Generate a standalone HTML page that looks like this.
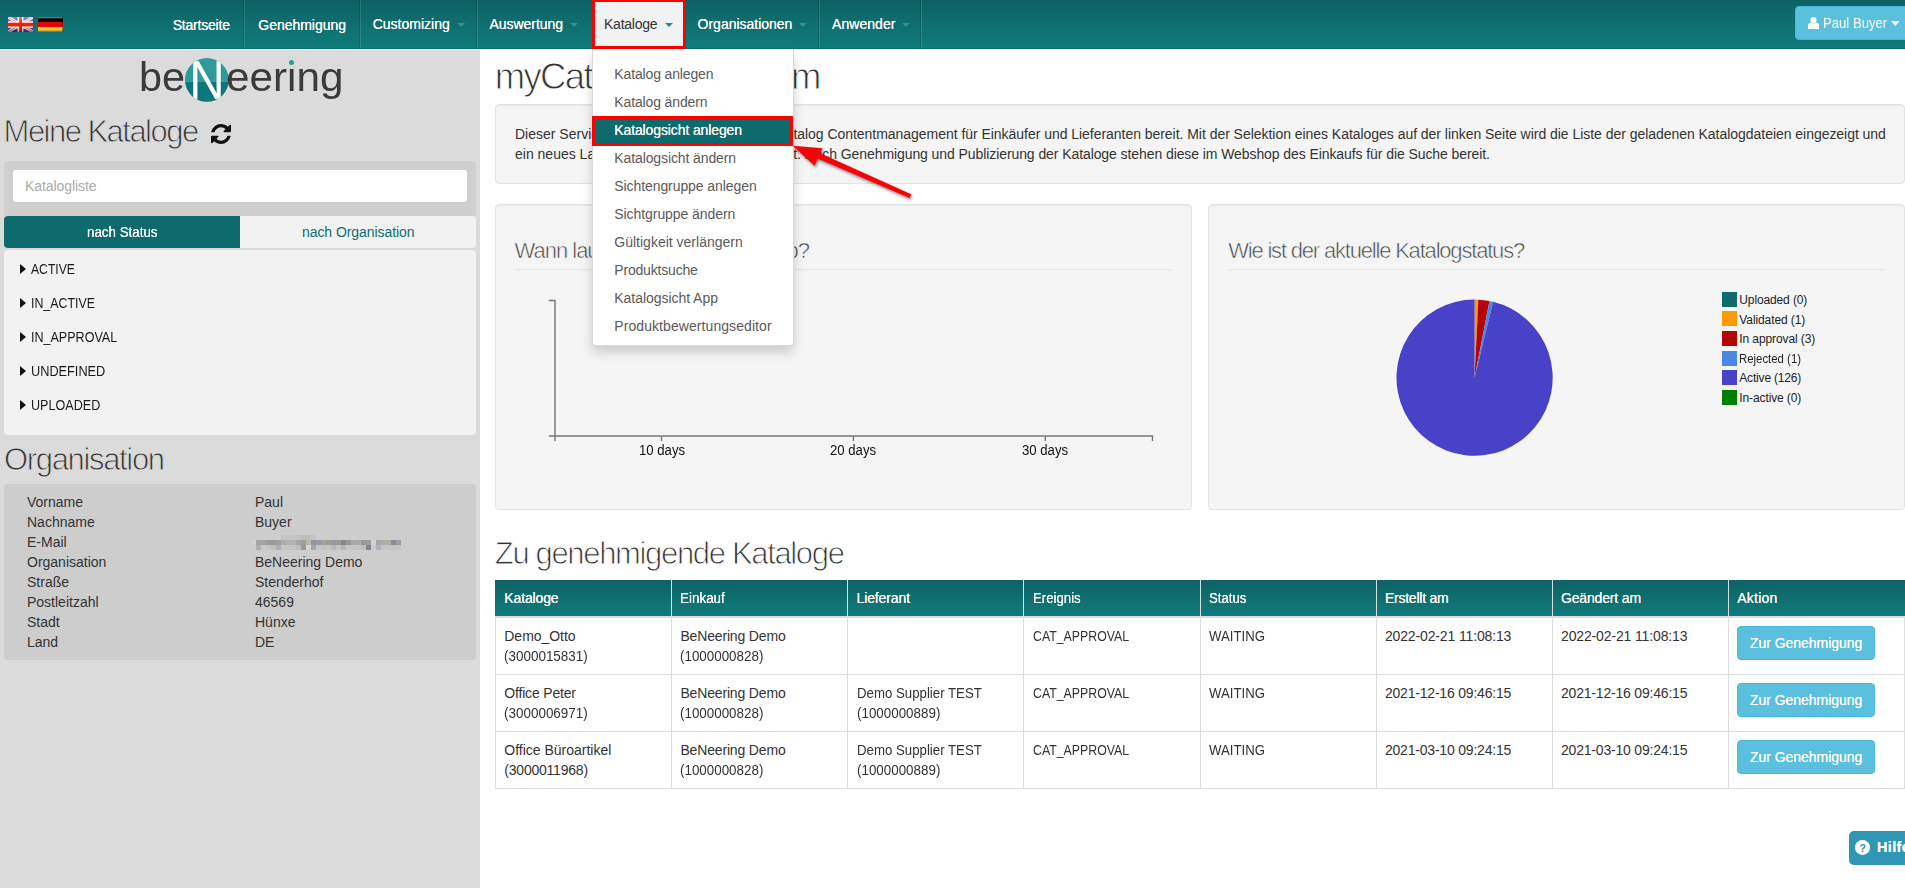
<!DOCTYPE html>
<html lang="de"><head><meta charset="utf-8"><title>myCatalog</title>
<style>
html,body{margin:0;padding:0}
body{width:1905px;height:888px;overflow:hidden;background:#fff;position:relative;font-family:"Liberation Sans",Arial,sans-serif;font-size:14px;color:#333}
.t{position:absolute;white-space:nowrap;display:block}
.b{position:absolute;box-sizing:border-box}
svg{position:absolute;overflow:visible}

.thin{-webkit-text-stroke:0.9px var(--bg)}

</style></head><body>
<div class="b" style="left:0px;top:49px;width:480px;height:839px;background:#dbdbdb"></div>
<div class="b" style="left:0px;top:0px;width:1905px;height:49px;background:linear-gradient(#0d6264,#117b7b);border-bottom:1px solid #0a6c6c"></div>
<div class="b" style="left:0px;top:49px;width:480px;height:1px;background:#f2f2f2"></div>
<svg style="left:8px;top:17px;overflow:hidden" width="25" height="15" viewBox="0 0 25 15"><defs><linearGradient id="gl" x1="0" y1="0" x2="0" y2="1"><stop offset="0" stop-color="#fff" stop-opacity=".38"/><stop offset=".45" stop-color="#fff" stop-opacity="0"/><stop offset=".7" stop-color="#000" stop-opacity="0"/><stop offset="1" stop-color="#000" stop-opacity=".42"/></linearGradient></defs><rect width="25" height="15" fill="#4545ae"/><path d="M0 0L25 15M25 0L0 15" stroke="#fff" stroke-width="2.800"/><path d="M0 0L25 15M25 0L0 15" stroke="#f0503c" stroke-width=".9"/><path d="M12.500 0V15" stroke="#fff" stroke-width="6"/><path d="M0 7.500H25" stroke="#fff" stroke-width="6.400"/><path d="M12.600 0V15" stroke="#f02200" stroke-width="3"/><path d="M0 7.600H25" stroke="#f02200" stroke-width="3.800"/><rect width="25" height="15" fill="url(#gl)"/></svg>
<svg style="left:38px;top:17px;overflow:hidden" width="25" height="15" viewBox="0 0 25 15"><defs><linearGradient id="gd" x1="0" y1="0" x2="0" y2="1"><stop offset="0" stop-color="#fff" stop-opacity=".6"/><stop offset=".12" stop-color="#fff" stop-opacity=".05"/><stop offset=".85" stop-color="#000" stop-opacity="0"/><stop offset="1" stop-color="#000" stop-opacity=".5"/></linearGradient></defs><rect width="25" height="5" fill="#000"/><rect y="5" width="25" height="5" fill="#e80000"/><rect y="10" width="25" height="5" fill="#f8c832"/><rect width="25" height="15" fill="url(#gd)"/><rect x="24" width="1" height="15" fill="#000" fill-opacity=".35"/></svg>
<div class="b" style="left:244px;top:0px;width:1px;height:48px;background:rgba(255,255,255,.13)"></div>
<div class="b" style="left:243px;top:0px;width:1px;height:48px;background:rgba(0,0,0,.12)"></div>
<div class="b" style="left:360px;top:0px;width:1px;height:48px;background:rgba(255,255,255,.13)"></div>
<div class="b" style="left:359px;top:0px;width:1px;height:48px;background:rgba(0,0,0,.12)"></div>
<div class="b" style="left:477px;top:0px;width:1px;height:48px;background:rgba(255,255,255,.13)"></div>
<div class="b" style="left:476px;top:0px;width:1px;height:48px;background:rgba(0,0,0,.12)"></div>
<div class="b" style="left:819px;top:0px;width:1px;height:48px;background:rgba(255,255,255,.13)"></div>
<div class="b" style="left:818px;top:0px;width:1px;height:48px;background:rgba(0,0,0,.12)"></div>
<div class="b" style="left:921px;top:0px;width:1px;height:48px;background:rgba(255,255,255,.13)"></div>
<div class="b" style="left:920px;top:0px;width:1px;height:48px;background:rgba(0,0,0,.12)"></div>
<span class="t" style="left:172.7px;top:15.65px;font-size:14px;line-height:18px;color:#fff;letter-spacing:-0.203px;text-shadow:0 0 .25px #fff;">Startseite</span>
<span class="t" style="left:258.3px;top:15.65px;font-size:14px;line-height:18px;color:#fff;letter-spacing:-0.021px;text-shadow:0 0 .25px #fff;">Genehmigung</span>
<span class="t" style="left:372.7px;top:15.35px;font-size:14px;line-height:18px;color:#fff;letter-spacing:0.000px;text-shadow:0 0 .25px #fff;">Customizing</span>
<svg style="left:456.5px;top:23px" width="8" height="4"><path d="M0 0h8l-4 4z" fill="#3a8f90"/></svg>
<span class="t" style="left:489.5px;top:15.35px;font-size:14px;line-height:18px;color:#fff;letter-spacing:-0.045px;text-shadow:0 0 .25px #fff;">Auswertung</span>
<svg style="left:569.5px;top:23px" width="8" height="4"><path d="M0 0h8l-4 4z" fill="#3a8f90"/></svg>
<span class="t" style="left:697.6px;top:15.35px;font-size:14px;line-height:18px;color:#fff;letter-spacing:-0.016px;text-shadow:0 0 .25px #fff;">Organisationen</span>
<svg style="left:799px;top:23px" width="8" height="4"><path d="M0 0h8l-4 4z" fill="#3a8f90"/></svg>
<span class="t" style="left:832.0px;top:15.35px;font-size:14px;line-height:18px;color:#fff;letter-spacing:0.055px;text-shadow:0 0 .25px #fff;">Anwender</span>
<svg style="left:902px;top:23px" width="8" height="4"><path d="M0 0h8l-4 4z" fill="#3a8f90"/></svg>
<div class="b" style="left:592px;top:-1px;width:94px;height:49.7px;background:#f2f2f2;border:3px solid #fd0000"></div>
<span class="t" style="left:604.0px;top:15.35px;font-size:14px;line-height:18px;color:#333;letter-spacing:-0.236px;">Kataloge</span>
<svg style="left:664.500px;top:23.200px" width="8" height="4"><path d="M0 0h8l-4 4z" fill="#21888a"/></svg>
<div class="b" style="left:1795px;top:6px;width:120px;height:34px;background:#5bc0de;border:1px solid #46b8da;border-radius:4px"></div>
<svg style="left:1808px;top:17px" width="11" height="12" viewBox="0 0 11 12"><circle cx="5.5" cy="3.1" r="3.1" fill="#fff"/><path d="M0 12V9.5Q0 6 2.6 5.6Q5.5 7.6 8.4 5.6Q11 6 11 9.5V12z" fill="#fff"/></svg>
<span class="t" style="left:1823.3px;top:14.05px;font-size:14px;line-height:18px;color:#fff;transform:scaleX(0.9377);transform-origin:0 0;">Paul Buyer</span>
<svg style="left:1891px;top:21px" width="8.6" height="5"><path d="M0 0h8.600l-4.300 5z" fill="#fff"/></svg>
<span class="t" style="left:138.6px;top:50.22px;font-size:41.5px;line-height:54px;color:#3b3b3b;transform:scaleX(0.9966);transform-origin:0 0;">be</span>
<svg style="left:184.600px;top:58.200px" width="43.800" height="43.800" viewBox="0 0 43.800 43.800"><defs><clipPath id="lc"><circle cx="21.900" cy="21.900" r="21.900"/></clipPath></defs><g clip-path="url(#lc)"><rect width="43.800" height="23.600" fill="#2f9a9a"/><rect y="23.600" width="43.800" height="21" fill="#0c7678"/><text x="21.900" y="41" text-anchor="middle" font-family="Liberation Sans, Arial, sans-serif" font-size="55" fill="#fff" textLength="35.500" lengthAdjust="spacingAndGlyphs">N</text></g></svg>
<span class="t" style="left:225.6px;top:50.22px;font-size:41.5px;line-height:54px;color:#3b3b3b;transform:scaleX(1.0187);transform-origin:0 0;">eering</span>
<div class="b" style="left:288.6px;top:60.1px;width:5.4px;height:5.4px;background:#2a9a9b;border-radius:50%;box-shadow:0 0 0 1px #dbdbdb"></div>
<span class="t thin" style="left:3.6px;top:111.56px;font-size:31px;line-height:40px;color:#333;letter-spacing:-1.529px;--bg:#dbdbdb;">Meine Kataloge</span>
<svg style="left:211px;top:124px" width="20" height="20" viewBox="128 128 1536 1536"><path fill="#111" d="M1639 1056q0 5-1 7-64 268-268 434.500t-478 166.500q-146 0-282.500-55t-243.500-157l-129 129q-19 19-45 19t-45-19-19-45v-448q0-26 19-45t45-19h448q26 0 45 19t19 45-19 45l-137 137q71 66 161 102t187 36q134 0 250-65t186-179q11-17 53-117 8-23 30-23h192q13 0 22.500 9.500t9.500 22.500zm25-800v448q0 26-19 45t-45 19h-448q-26 0-45-19t-19-45 19-45l138-138q-148-137-349-137-134 0-250 65t-186 179q-11 17-53 117-8 23-30 23h-199q-13 0-22.500-9.500t-9.500-22.500v-7q65-268 270-434.500t480-166.500q146 0 284 55.500t245 156.500l130-129q19-19 45-19t45 19 19 45z"/></svg>
<div class="b" style="left:4px;top:161px;width:472px;height:55px;background:#cfcfcf;border-radius:4px 4px 0 0"></div>
<div class="b" style="left:13px;top:170px;width:454px;height:32px;background:#fff;border-radius:3px"></div>
<span class="t" style="left:25.0px;top:177.15px;font-size:14px;line-height:18px;color:#aaa;letter-spacing:-0.078px;">Katalogliste</span>
<div class="b" style="left:4px;top:216px;width:236px;height:32px;background:#0e6b6d;border-radius:4px 0 0 4px"></div>
<div class="b" style="left:240px;top:216px;width:236px;height:32px;background:#f2f2f2;border-radius:0 4px 4px 0"></div>
<span class="t" style="left:87.0px;top:223.15px;font-size:14px;line-height:18px;color:#fff;transform:scaleX(0.9537);transform-origin:0 0;text-shadow:0 0 .4px #fff;">nach Status</span>
<span class="t" style="left:302.0px;top:223.15px;font-size:14px;line-height:18px;color:#0f6f71;letter-spacing:-0.067px;">nach Organisation</span>
<div class="b" style="left:4px;top:250px;width:472px;height:184.5px;background:#f2f2f2;border-radius:4px"></div>
<svg style="left:20px;top:264px" width="6" height="10"><path d="M0 0v10l6-5z" fill="#111"/></svg>
<span class="t" style="left:30.7px;top:260.15px;font-size:14px;line-height:18px;color:#1a1a1a;transform:scaleX(0.8699);transform-origin:0 0;">ACTIVE</span>
<svg style="left:20px;top:298px" width="6" height="10"><path d="M0 0v10l6-5z" fill="#111"/></svg>
<span class="t" style="left:30.7px;top:294.15px;font-size:14px;line-height:18px;color:#1a1a1a;transform:scaleX(0.8831);transform-origin:0 0;">IN_ACTIVE</span>
<svg style="left:20px;top:332px" width="6" height="10"><path d="M0 0v10l6-5z" fill="#111"/></svg>
<span class="t" style="left:30.7px;top:328.15px;font-size:14px;line-height:18px;color:#1a1a1a;transform:scaleX(0.8956);transform-origin:0 0;">IN_APPROVAL</span>
<svg style="left:20px;top:366px" width="6" height="10"><path d="M0 0v10l6-5z" fill="#111"/></svg>
<span class="t" style="left:30.7px;top:362.15px;font-size:14px;line-height:18px;color:#1a1a1a;transform:scaleX(0.9097);transform-origin:0 0;">UNDEFINED</span>
<svg style="left:20px;top:400px" width="6" height="10"><path d="M0 0v10l6-5z" fill="#111"/></svg>
<span class="t" style="left:30.7px;top:396.15px;font-size:14px;line-height:18px;color:#1a1a1a;transform:scaleX(0.8996);transform-origin:0 0;">UPLOADED</span>
<span class="t thin" style="left:4.0px;top:439.56px;font-size:31px;line-height:40px;color:#333;letter-spacing:-1.339px;--bg:#dbdbdb;">Organisation</span>
<div class="b" style="left:4px;top:484px;width:472px;height:175.5px;background:#cdcdcd;border-radius:4px"></div>
<span class="t" style="left:27.0px;top:493.15px;font-size:14px;line-height:18px;color:#333;">Vorname</span>
<span class="t" style="left:255.0px;top:493.15px;font-size:14px;line-height:18px;color:#333;">Paul</span>
<span class="t" style="left:27.0px;top:513.15px;font-size:14px;line-height:18px;color:#333;">Nachname</span>
<span class="t" style="left:255.0px;top:513.15px;font-size:14px;line-height:18px;color:#333;">Buyer</span>
<span class="t" style="left:27.0px;top:533.15px;font-size:14px;line-height:18px;color:#333;">E-Mail</span>
<span class="t" style="left:27.0px;top:553.15px;font-size:14px;line-height:18px;color:#333;">Organisation</span>
<span class="t" style="left:255.0px;top:553.15px;font-size:14px;line-height:18px;color:#333;">BeNeering Demo</span>
<span class="t" style="left:27.0px;top:573.15px;font-size:14px;line-height:18px;color:#333;">Straße</span>
<span class="t" style="left:255.0px;top:573.15px;font-size:14px;line-height:18px;color:#333;">Stenderhof</span>
<span class="t" style="left:27.0px;top:593.15px;font-size:14px;line-height:18px;color:#333;">Postleitzahl</span>
<span class="t" style="left:255.0px;top:593.15px;font-size:14px;line-height:18px;color:#333;">46569</span>
<span class="t" style="left:27.0px;top:613.15px;font-size:14px;line-height:18px;color:#333;">Stadt</span>
<span class="t" style="left:255.0px;top:613.15px;font-size:14px;line-height:18px;color:#333;">Hünxe</span>
<span class="t" style="left:27.0px;top:633.15px;font-size:14px;line-height:18px;color:#333;">Land</span>
<span class="t" style="left:255.0px;top:633.15px;font-size:14px;line-height:18px;color:#333;">DE</span>
<div class="b" style="left:281px;top:535px;width:35px;height:5px;background:linear-gradient(90deg,#c6c4c6,#c4c6c4 40%,#bcbcbc 70%,#c2c8d0)"></div>
<div class="b" style="left:351px;top:535px;width:5px;height:5px;background:#d0d2d0"></div>
<div class="b" style="left:251px;top:540px;width:5px;height:5px;background:#d2d0cc"></div>
<div class="b" style="left:256px;top:540px;width:145px;height:5px;background:linear-gradient(90deg,#a5a3a8 0px,#a5a3a8 5px,#a2a2a2 5px,#a2a2a2 10px,#9d9b9c 10px,#9d9b9c 15px,#9b9a9a 15px,#9b9a9a 20px,#a0a0a4 20px,#a0a0a4 25px,#b0adb2 25px,#b0adb2 30px,#b2b2b0 30px,#b2b2b0 35px,#b3b3b1 35px,#b3b3b1 40px,#aba3a3 40px,#aba3a3 45px,#9c9fa6 45px,#9c9fa6 50px,#bfb5aa 50px,#bfb5aa 55px,#8e999c 55px,#8e999c 60px,#9a98a2 60px,#9a98a2 65px,#a0a2a4 65px,#a0a2a4 70px,#a59a90 70px,#a59a90 75px,#9896a4 75px,#9896a4 80px,#979c9e 80px,#979c9e 85px,#8c8684 85px,#8c8684 90px,#929a9e 90px,#929a9e 95px,#a5abae 95px,#a5abae 100px,#b0a8ac 100px,#b0a8ac 105px,#929a9a 105px,#929a9a 110px,#a398a8 110px,#a398a8 115px,#d0d4cc 115px,#d0d4cc 120px,#a8a6ae 120px,#a8a6ae 125px,#aaaca8 125px,#aaaca8 130px,#acaeaa 130px,#acaeaa 135px,#988a8c 135px,#988a8c 140px,#94a0ac 140px,#94a0ac 145px)"></div>
<div class="b" style="left:256px;top:545px;width:145px;height:5px;background:linear-gradient(90deg,#b0b0b0 0px,#b0b0b0 5px,#c6caca 5px,#c6caca 10px,#c4c4c4 10px,#c4c4c4 15px,#c2bebb 15px,#c2bebb 20px,#aab0b4 20px,#aab0b4 25px,#c4c4c4 25px,#c4c4c4 30px,#c4c4c4 30px,#c4c4c4 35px,#c4c4c4 35px,#c4c4c4 40px,#c2bcb8 40px,#c2bcb8 45px,#9a9a9e 45px,#9a9a9e 50px,#d4d4d4 50px,#d4d4d4 55px,#a0a8aa 55px,#a0a8aa 60px,#c4c4c4 60px,#c4c4c4 65px,#bfc0c4 65px,#bfc0c4 70px,#c4c4c4 70px,#c4c4c4 75px,#bbb8bc 75px,#bbb8bc 80px,#c4c4c4 80px,#c4c4c4 85px,#b8b4ae 85px,#b8b4ae 90px,#c2c8cc 90px,#c2c8cc 95px,#c4c4c4 95px,#c4c4c4 100px,#c4c4c4 100px,#c4c4c4 105px,#c2bab4 105px,#c2bab4 110px,#80828e 110px,#80828e 115px,#c8cacc 115px,#c8cacc 120px,#b2b2b2 120px,#b2b2b2 125px,#c4c4c4 125px,#c4c4c4 130px,#c4c4c4 130px,#c4c4c4 135px,#c4c4c4 135px,#c4c4c4 140px,#c0c6ca 140px,#c0c6ca 145px)"></div>
<span class="t thin" style="left:494.8px;top:53.05px;font-size:36.5px;line-height:47px;color:#333;letter-spacing:-1.674px;--bg:#fff;">myCatalog Programm</span>
<div class="b" style="left:495px;top:104px;width:1409.5px;height:80px;background:#f5f5f5;border:1px solid #e3e3e3;border-radius:4px;box-shadow:inset 0 1px 1px rgba(0,0,0,.05)"></div>
<span class="t" style="left:515.0px;top:125.45px;font-size:14px;line-height:18px;color:#333;">Dieser Service stellt das beNeering myCa</span>
<span class="t" style="left:793.4px;top:125.45px;font-size:14px;line-height:18px;color:#333;letter-spacing:-0.037px;">talog Contentmanagement für Einkäufer und Lieferanten bereit. Mit der Selektion eines Kataloges auf der linken Seite wird die Liste der geladenen Katalogdateien eingezeigt und</span>
<span class="t" style="left:515.0px;top:145.45px;font-size:14px;line-height:18px;color:#333;">ein neues Ladefile bereitgestell</span>
<span class="t" style="left:793.2px;top:145.45px;font-size:14px;line-height:18px;color:#333;letter-spacing:-0.083px;">t. Nach Genehmigung und Publizierung der Kataloge stehen diese im Webshop des Einkaufs für die Suche bereit.</span>
<div class="b" style="left:495px;top:204px;width:697px;height:305.5px;background:#f5f5f5;border:1px solid #e3e3e3;border-radius:4px;box-shadow:inset 0 1px 1px rgba(0,0,0,.05)"></div>
<div class="b" style="left:1208px;top:204px;width:696.5px;height:305.5px;background:#f5f5f5;border:1px solid #e3e3e3;border-radius:4px;box-shadow:inset 0 1px 1px rgba(0,0,0,.05)"></div>
<span class="t thin" style="left:514.5px;top:236.08px;font-size:22px;line-height:29px;color:#444;letter-spacing:-1.003px;--bg:#f5f5f5;-webkit-text-stroke-width:.55px;">Wann laufen meine Kataloge ab?</span>
<span class="t thin" style="left:1228.2px;top:236.08px;font-size:22px;line-height:29px;color:#444;letter-spacing:-1.191px;--bg:#f5f5f5;-webkit-text-stroke-width:.55px;">Wie ist der aktuelle Katalogstatus?</span>
<div class="b" style="left:515px;top:269px;width:657px;height:1px;background:#e5e5e5"></div>
<div class="b" style="left:1228.5px;top:269px;width:656.5px;height:1px;background:#e5e5e5"></div>
<svg style="left:540px;top:290px" width="630" height="160"><path d="M8.800 10.500H15V151M8.800 146H612.500V151M121.5 146v5M313.4 146v5M505.3 146v5" fill="none" stroke="#777" stroke-width="1.4"/></svg>
<span class="t" style="left:638.5px;top:441.45px;font-size:14px;line-height:18px;color:#111;transform:scaleX(0.9385);transform-origin:0 0;">10 days</span>
<span class="t" style="left:830.4px;top:441.45px;font-size:14px;line-height:18px;color:#111;transform:scaleX(0.9385);transform-origin:0 0;">20 days</span>
<span class="t" style="left:1022.3px;top:441.45px;font-size:14px;line-height:18px;color:#111;transform:scaleX(0.9385);transform-origin:0 0;">30 days</span>
<svg style="left:0;top:0" width="1905" height="888"><path d="M1474.6 377.7L1474.60 299.60 A78.1 78.1 0 0 1 1478.34 299.69 Z" fill="#ff9900"/><path d="M1474.6 377.7L1478.34 299.69 A78.1 78.1 0 0 1 1489.49 301.03 Z" fill="#b40404"/><path d="M1474.6 377.7L1489.49 301.03 A78.1 78.1 0 0 1 1493.15 301.84 Z" fill="#4a86e8"/><path d="M1474.6 377.7L1493.15 301.84 A78.1 78.1 0 1 1 1474.60 299.60 Z" fill="#4842c8"/></svg>
<div class="b" style="left:1722px;top:292px;width:15px;height:15px;background:#0e6b6d"></div>
<span class="t" style="left:1739.3px;top:292.24px;font-size:12px;line-height:16px;color:#222;letter-spacing:-0.125px;">Uploaded (0)</span>
<div class="b" style="left:1722px;top:311px;width:15px;height:15px;background:#ff9900"></div>
<span class="t" style="left:1739.3px;top:312.04px;font-size:12px;line-height:16px;color:#222;letter-spacing:-0.095px;">Validated (1)</span>
<div class="b" style="left:1722px;top:331px;width:15px;height:15px;background:#b40404"></div>
<span class="t" style="left:1739.3px;top:331.24px;font-size:12px;line-height:16px;color:#222;letter-spacing:-0.097px;">In approval (3)</span>
<div class="b" style="left:1722px;top:351px;width:15px;height:15px;background:#4a86e8"></div>
<span class="t" style="left:1739.3px;top:351.24px;font-size:12px;line-height:16px;color:#222;transform:scaleX(0.9486);transform-origin:0 0;">Rejected (1)</span>
<div class="b" style="left:1722px;top:370px;width:15px;height:15px;background:#4842c8"></div>
<span class="t" style="left:1739.3px;top:370.24px;font-size:12px;line-height:16px;color:#222;letter-spacing:-0.183px;">Active (126)</span>
<div class="b" style="left:1722px;top:390px;width:15px;height:15px;background:#008000"></div>
<span class="t" style="left:1739.3px;top:390.24px;font-size:12px;line-height:16px;color:#222;letter-spacing:-0.112px;">In-active (0)</span>
<span class="t thin" style="left:494.8px;top:534.06px;font-size:31px;line-height:40px;color:#333;letter-spacing:-1.339px;--bg:#fff;">Zu genehmigende Kataloge</span>
<div class="b" style="left:495px;top:580px;width:1409.5px;height:36px;background:linear-gradient(#0d6264,#117b7b)"></div>
<div class="b" style="left:495px;top:616px;width:1410px;height:2px;background:#ddd"></div>
<span class="t" style="left:504.3px;top:588.65px;font-size:14px;line-height:18px;color:#fff;letter-spacing:-0.136px;text-shadow:0 0 .3px #fff;">Kataloge</span>
<span class="t" style="left:680.4px;top:588.65px;font-size:14px;line-height:18px;color:#fff;transform:scaleX(0.9596);transform-origin:0 0;text-shadow:0 0 .3px #fff;">Einkauf</span>
<div class="b" style="left:671.125px;top:580px;width:1px;height:36px;background:#d3e0e0"></div>
<span class="t" style="left:856.5px;top:588.65px;font-size:14px;line-height:18px;color:#fff;letter-spacing:-0.119px;text-shadow:0 0 .3px #fff;">Lieferant</span>
<div class="b" style="left:847.25px;top:580px;width:1px;height:36px;background:#d3e0e0"></div>
<span class="t" style="left:1032.7px;top:588.65px;font-size:14px;line-height:18px;color:#fff;transform:scaleX(0.9434);transform-origin:0 0;text-shadow:0 0 .3px #fff;">Ereignis</span>
<div class="b" style="left:1023.38px;top:580px;width:1px;height:36px;background:#d3e0e0"></div>
<span class="t" style="left:1208.8px;top:588.65px;font-size:14px;line-height:18px;color:#fff;transform:scaleX(0.9398);transform-origin:0 0;text-shadow:0 0 .3px #fff;">Status</span>
<div class="b" style="left:1199.5px;top:580px;width:1px;height:36px;background:#d3e0e0"></div>
<span class="t" style="left:1384.9px;top:588.65px;font-size:14px;line-height:18px;color:#fff;letter-spacing:-0.231px;text-shadow:0 0 .3px #fff;">Erstellt am</span>
<div class="b" style="left:1375.62px;top:580px;width:1px;height:36px;background:#d3e0e0"></div>
<span class="t" style="left:1561.0px;top:588.65px;font-size:14px;line-height:18px;color:#fff;letter-spacing:-0.167px;text-shadow:0 0 .3px #fff;">Geändert am</span>
<div class="b" style="left:1551.75px;top:580px;width:1px;height:36px;background:#d3e0e0"></div>
<span class="t" style="left:1737.2px;top:588.65px;font-size:14px;line-height:18px;color:#fff;letter-spacing:0.259px;text-shadow:0 0 .3px #fff;">Aktion</span>
<div class="b" style="left:1727.88px;top:580px;width:1px;height:36px;background:#d3e0e0"></div>
<div class="b" style="left:495px;top:674px;width:1410px;height:1px;background:#ddd"></div>
<span class="t" style="left:504.3px;top:627.45px;font-size:14px;line-height:18px;color:#333;letter-spacing:-0.033px;">Demo_Otto</span>
<span class="t" style="left:504.3px;top:647.45px;font-size:14px;line-height:18px;color:#333;transform:scaleX(0.9607);transform-origin:0 0;">(3000015831)</span>
<span class="t" style="left:680.4px;top:627.45px;font-size:14px;line-height:18px;color:#333;letter-spacing:-0.157px;">BeNeering Demo</span>
<span class="t" style="left:680.4px;top:647.45px;font-size:14px;line-height:18px;color:#333;transform:scaleX(0.9561);transform-origin:0 0;">(1000000828)</span>
<span class="t" style="left:1032.7px;top:627.45px;font-size:14px;line-height:18px;color:#333;transform:scaleX(0.8808);transform-origin:0 0;">CAT_APPROVAL</span>
<span class="t" style="left:1208.8px;top:627.45px;font-size:14px;line-height:18px;color:#333;transform:scaleX(0.9432);transform-origin:0 0;">WAITING</span>
<span class="t" style="left:1384.9px;top:627.45px;font-size:14px;line-height:18px;color:#333;letter-spacing:-0.138px;">2022-02-21 11:08:13</span>
<span class="t" style="left:1561.0px;top:627.45px;font-size:14px;line-height:18px;color:#333;letter-spacing:-0.138px;">2022-02-21 11:08:13</span>
<div class="b" style="left:1737px;top:626px;width:138px;height:34px;background:#5bc0de;border:1px solid #46b8da;border-radius:4px"></div>
<span class="t" style="left:1750.0px;top:634.15px;font-size:14px;line-height:18px;color:#fff;letter-spacing:-0.042px;text-shadow:0 0 .3px #fff;">Zur Genehmigung</span>
<div class="b" style="left:495px;top:731px;width:1410px;height:1px;background:#ddd"></div>
<span class="t" style="left:504.3px;top:684.45px;font-size:14px;line-height:18px;color:#333;letter-spacing:-0.178px;">Office Peter</span>
<span class="t" style="left:504.3px;top:704.45px;font-size:14px;line-height:18px;color:#333;transform:scaleX(0.9607);transform-origin:0 0;">(3000006971)</span>
<span class="t" style="left:680.4px;top:684.45px;font-size:14px;line-height:18px;color:#333;letter-spacing:-0.157px;">BeNeering Demo</span>
<span class="t" style="left:680.4px;top:704.45px;font-size:14px;line-height:18px;color:#333;transform:scaleX(0.9561);transform-origin:0 0;">(1000000828)</span>
<span class="t" style="left:856.5px;top:684.45px;font-size:14px;line-height:18px;color:#333;transform:scaleX(0.9456);transform-origin:0 0;">Demo Supplier TEST</span>
<span class="t" style="left:856.5px;top:704.45px;font-size:14px;line-height:18px;color:#333;transform:scaleX(0.9561);transform-origin:0 0;">(1000000889)</span>
<span class="t" style="left:1032.7px;top:684.45px;font-size:14px;line-height:18px;color:#333;transform:scaleX(0.8808);transform-origin:0 0;">CAT_APPROVAL</span>
<span class="t" style="left:1208.8px;top:684.45px;font-size:14px;line-height:18px;color:#333;transform:scaleX(0.9432);transform-origin:0 0;">WAITING</span>
<span class="t" style="left:1384.9px;top:684.45px;font-size:14px;line-height:18px;color:#333;letter-spacing:-0.196px;">2021-12-16 09:46:15</span>
<span class="t" style="left:1561.0px;top:684.45px;font-size:14px;line-height:18px;color:#333;letter-spacing:-0.196px;">2021-12-16 09:46:15</span>
<div class="b" style="left:1737px;top:683px;width:138px;height:34px;background:#5bc0de;border:1px solid #46b8da;border-radius:4px"></div>
<span class="t" style="left:1750.0px;top:691.15px;font-size:14px;line-height:18px;color:#fff;letter-spacing:-0.042px;text-shadow:0 0 .3px #fff;">Zur Genehmigung</span>
<div class="b" style="left:495px;top:788px;width:1410px;height:1px;background:#ddd"></div>
<span class="t" style="left:504.3px;top:741.45px;font-size:14px;line-height:18px;color:#333;letter-spacing:-0.006px;">Office Büroartikel</span>
<span class="t" style="left:504.3px;top:761.45px;font-size:14px;line-height:18px;color:#333;letter-spacing:-0.218px;">(3000011968)</span>
<span class="t" style="left:680.4px;top:741.45px;font-size:14px;line-height:18px;color:#333;letter-spacing:-0.157px;">BeNeering Demo</span>
<span class="t" style="left:680.4px;top:761.45px;font-size:14px;line-height:18px;color:#333;transform:scaleX(0.9561);transform-origin:0 0;">(1000000828)</span>
<span class="t" style="left:856.5px;top:741.45px;font-size:14px;line-height:18px;color:#333;transform:scaleX(0.9456);transform-origin:0 0;">Demo Supplier TEST</span>
<span class="t" style="left:856.5px;top:761.45px;font-size:14px;line-height:18px;color:#333;transform:scaleX(0.9561);transform-origin:0 0;">(1000000889)</span>
<span class="t" style="left:1032.7px;top:741.45px;font-size:14px;line-height:18px;color:#333;transform:scaleX(0.8808);transform-origin:0 0;">CAT_APPROVAL</span>
<span class="t" style="left:1208.8px;top:741.45px;font-size:14px;line-height:18px;color:#333;transform:scaleX(0.9432);transform-origin:0 0;">WAITING</span>
<span class="t" style="left:1384.9px;top:741.45px;font-size:14px;line-height:18px;color:#333;letter-spacing:-0.196px;">2021-03-10 09:24:15</span>
<span class="t" style="left:1561.0px;top:741.45px;font-size:14px;line-height:18px;color:#333;letter-spacing:-0.196px;">2021-03-10 09:24:15</span>
<div class="b" style="left:1737px;top:740px;width:138px;height:34px;background:#5bc0de;border:1px solid #46b8da;border-radius:4px"></div>
<span class="t" style="left:1750.0px;top:748.15px;font-size:14px;line-height:18px;color:#fff;letter-spacing:-0.042px;text-shadow:0 0 .3px #fff;">Zur Genehmigung</span>
<div class="b" style="left:495px;top:618px;width:1px;height:171px;background:#ddd"></div>
<div class="b" style="left:671.125px;top:618px;width:1px;height:171px;background:#ddd"></div>
<div class="b" style="left:847.25px;top:618px;width:1px;height:171px;background:#ddd"></div>
<div class="b" style="left:1023.38px;top:618px;width:1px;height:171px;background:#ddd"></div>
<div class="b" style="left:1199.5px;top:618px;width:1px;height:171px;background:#ddd"></div>
<div class="b" style="left:1375.62px;top:618px;width:1px;height:171px;background:#ddd"></div>
<div class="b" style="left:1551.75px;top:618px;width:1px;height:171px;background:#ddd"></div>
<div class="b" style="left:1727.88px;top:618px;width:1px;height:171px;background:#ddd"></div>
<div class="b" style="left:1904px;top:618px;width:1px;height:171px;background:#ddd"></div>
<div class="b" style="left:1849px;top:831px;width:70px;height:34px;background:#2f96b4;border-radius:5px"></div>
<div class="b" style="left:1855px;top:840px;width:14.6px;height:14.6px;background:#fff;border-radius:50%"></div>
<span class="t" style="left:1859.4px;top:840.56px;font-size:10.5px;line-height:14px;color:#2f96b4;font-weight:bold;">?</span>
<span class="t" style="left:1877.0px;top:838.48px;font-size:14.5px;line-height:19px;color:#fff;font-weight:bold;letter-spacing:.35px;text-shadow:0 0 .4px #fff;">Hilfe</span>
<div class="b" style="left:592.4px;top:49px;width:201.8px;height:297.2px;background:#fff;border:1px solid rgba(0,0,0,.15);border-top:none;border-radius:0 0 4px 4px;box-shadow:0 6px 12px rgba(0,0,0,.175)"></div>
<span class="t" style="left:614.3px;top:64.95px;font-size:14px;line-height:18px;color:#5a5a5a;letter-spacing:-0.140px;">Katalog anlegen</span>
<span class="t" style="left:614.3px;top:92.95px;font-size:14px;line-height:18px;color:#5a5a5a;letter-spacing:-0.132px;">Katalog ändern</span>
<div class="b" style="left:591.5px;top:116.2px;width:201.5px;height:29.8px;background:#0e6b6d;border:3px solid #fd0000"></div>
<span class="t" style="left:614.3px;top:120.95px;font-size:14px;line-height:18px;color:#fff;letter-spacing:-0.118px;text-shadow:0 0 .3px #fff;">Katalogsicht anlegen</span>
<span class="t" style="left:614.3px;top:148.95px;font-size:14px;line-height:18px;color:#5a5a5a;letter-spacing:-0.106px;">Katalogsicht ändern</span>
<span class="t" style="left:614.3px;top:176.95px;font-size:14px;line-height:18px;color:#5a5a5a;letter-spacing:-0.082px;">Sichtengruppe anlegen</span>
<span class="t" style="left:614.3px;top:204.95px;font-size:14px;line-height:18px;color:#5a5a5a;letter-spacing:-0.067px;">Sichtgruppe ändern</span>
<span class="t" style="left:614.3px;top:232.95px;font-size:14px;line-height:18px;color:#5a5a5a;letter-spacing:0.003px;">Gültigkeit verlängern</span>
<span class="t" style="left:614.3px;top:260.95px;font-size:14px;line-height:18px;color:#5a5a5a;letter-spacing:-0.189px;">Produktsuche</span>
<span class="t" style="left:614.3px;top:288.95px;font-size:14px;line-height:18px;color:#5a5a5a;letter-spacing:-0.045px;">Katalogsicht App</span>
<span class="t" style="left:614.3px;top:316.95px;font-size:14px;line-height:18px;color:#5a5a5a;letter-spacing:0.074px;">Produktbewertungseditor</span>
<svg style="left:0;top:0;filter:drop-shadow(1.5px 2px 1.5px rgba(0,0,0,.45))" width="1905" height="888"><path d="M792.6 145.8L822.5 148.3L820.2 153.2L911.2 194.3L909.6 198.1L817.6 158.6L814.7 165.8Z" fill="#fb0007"/></svg>
</body></html>
